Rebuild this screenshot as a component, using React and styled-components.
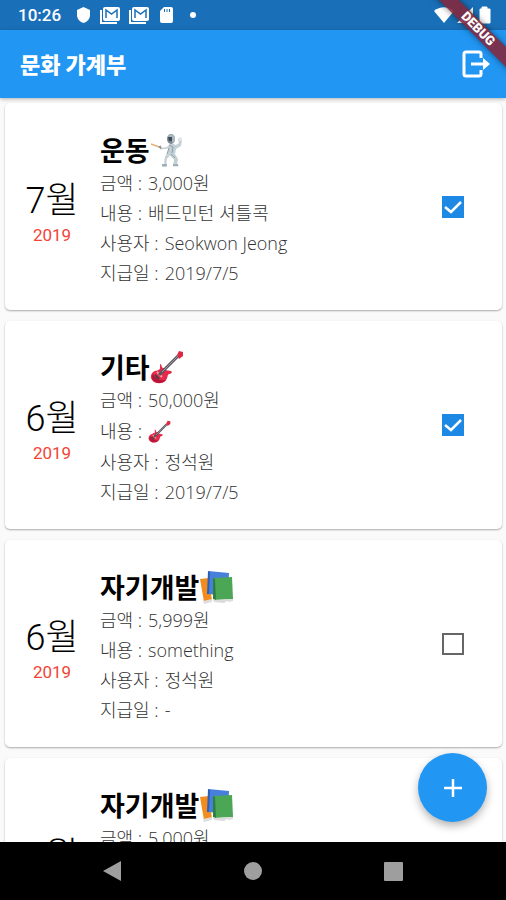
import React from 'react';
import styled, { createGlobalStyle } from 'styled-components';

const GlobalStyle = createGlobalStyle`
    * {
        box-sizing: border-box;
    }
    body {
        margin: 0;
        background: #fafafa;
        font-family: Roboto, 'Noto Sans CJK KR', sans-serif;
    }
    button {
        border: 0;
        padding: 0;
        background: none;
        cursor: pointer;
    }
    svg {
        display: block;
    }
`
const StyledScreen = styled.div`
    position: relative;
    display: flex;
    flex-direction: column;
    height: 100vh;
    overflow: hidden;
`
const StyledStatusBar = styled.div`
    display: flex;
    align-items: center;
    flex: none;
    height: 30px;
    padding: 0 14px 0 18px;
    background: #1a70b8;
    color: white;
`
const StyledClock = styled.span`
    font-size: 17px;
    font-weight: 500;
    line-height: 30px;
    margin-right: 15px;
`
const StyledNotifications = styled.div`
    display: flex;
    align-items: center;
    flex: 1;
    gap: 9px;
`
const StyledSignals = styled.div`
    display: flex;
    align-items: center;
    gap: 3px;
`
const StyledAppBar = styled.header`
    position: relative;
    display: flex;
    align-items: center;
    justify-content: space-between;
    flex: none;
    height: 68px;
    padding: 0 15px 0 20px;
    background: #2196f3;
    color: white;
    box-shadow: 0 1px 4px rgba(0, 0, 0, .3);
`
const StyledAppTitle = styled.h1`
    margin: 0;
    padding-bottom: 3px;
    font-family: 'Noto Sans CJK KR', sans-serif;
    font-size: 22px;
    font-weight: 900;
    line-height: 32px;
`
const StyledBody = styled.main`
    position: relative;
    flex: 1;
    min-height: 0;
`
const StyledList = styled.ul`
    display: flex;
    flex-direction: column;
    gap: 11px;
    height: 100%;
    margin: 0;
    padding: 5px 4px 0 5px;
    overflow: hidden;
    list-style: none;
`
const StyledCard = styled.li`
    display: grid;
    grid-template-columns: 92px 1fr 98px;
    align-items: center;
    flex: none;
    min-height: 207px;
    padding: 22px 0;
    background: white;
    border-radius: 5px;
    box-shadow: 0 1px 2px rgba(0, 0, 0, .32);
`
const StyledDate = styled.div`
    padding: 12px 0 0 2px;
    text-align: center;
`
const StyledMonth = styled.div`
    font-size: 36px;
    font-weight: 300;
    line-height: 44px;
`
const StyledYear = styled.div`
    color: #f44336;
    font-size: 17px;
    line-height: 24px;
`
const StyledDetails = styled.div`
    padding: 6px 0 0 3px;
    font-family: 'Open Sans', 'Noto Sans CJK KR', sans-serif;
`
const StyledCategory = styled.h2`
    display: flex;
    align-items: center;
    margin: 0;
    font-family: 'Noto Sans CJK KR', sans-serif;
    font-size: 27px;
    font-weight: 700;
    line-height: 36px;
`
const StyledField = styled.div`
    display: flex;
    align-items: center;
    gap: 6px;
    height: ${props => props.$tall ? '32px' : '30px'};
    color: #333;
    font-size: 18px;
    font-weight: 300;
    line-height: 30px;
    white-space: nowrap;
`
const StyledCheck = styled.label`
    display: grid;
    place-items: center;
    > * {
        grid-area: 1 / 1;
    }
    svg {
        pointer-events: none;
    }
`
const StyledCheckbox = styled.input`
    appearance: none;
    width: 22px;
    height: 22px;
    margin: 0;
    border: 2px solid #666;
    cursor: pointer;
    &:checked {
        border-color: #1e88e5;
        background: #1e88e5;
    }
`
const StyledAddButton = styled.button`
    position: absolute;
    right: 19px;
    bottom: 20px;
    display: grid;
    place-items: center;
    width: 69px;
    height: 69px;
    border-radius: 50%;
    background: #2196f3;
    box-shadow: 0 4px 8px rgba(0, 0, 0, .3);
`
const StyledNavigation = styled.nav`
    position: relative;
    display: grid;
    grid-template-columns: repeat(3, 1fr);
    justify-items: center;
    align-items: center;
    flex: none;
    height: 58px;
    padding: 0 42px;
    background: black;
`
const StyledBanner = styled.div`
    position: absolute;
    top: 22px;
    right: -42px;
    width: 140px;
    height: 14px;
    background: rgba(130, 40, 62, .9);
    box-shadow: 0 0 6px rgba(0, 0, 0, .5);
    color: white;
    font-size: 13px;
    font-weight: 900;
    line-height: 14px;
    text-align: center;
    transform: rotate(45deg);
    pointer-events: none;
`

const MailIcon = () => (
    <svg width="20" height="18" viewBox="0 0 20 18">
        <path d="M1 4v13h16" fill="none" stroke="white" strokeWidth="2" />
        <path d="M5 1h13q2 0 2 2v10q0 2-2 2H5q-2 0-2-2V3q0-2 2-2z" fill="white" />
        <path d="M6 12V4l5.500 4L17 4v8" fill="none" stroke="#1a70b8" strokeWidth="1.500" />
    </svg>
)

const Fencer = ({ size }) => (
    <svg width={size} height={size} viewBox="0 0 34 34" role="img" aria-label="펜싱">
        <path d="M1 11l11 4" stroke="#e8b27a" strokeWidth="1.500" />
        <path d="M8 13.500l3-1v4z" fill="#8c979c" />
        <path d="M11 15l6-1 4-4 5 2 3-2-1-4 3-1 1 2-1 6-5 3-1 5 3 5-1 6h1.500v1.500H23l1-7-4-4-3 3-1 7 1 1.500h-5v-1.500l2-1 1-8 3-4v-4l-7 1z" fill="#c3d0d6" />
        <path d="M19 12l4 2-1 6M21 21l4 4M19 15l-2 6" fill="none" stroke="#8fa0a8" />
        <ellipse cx="21" cy="6" rx="4" ry="5" fill="#78878f" />
        <path d="M18 3c1-3 6-2 7 1v4l-2 2z" fill="#a9b8bf" />
        <path d="M18 4h4v4h-3z" fill="#3d4a52" />
        <path d="M28 5l3-1 1 4h-3z" fill="#dce5e9" />
        <path d="M12 31h5v2h-5zM23 31h5v2h-5z" fill="#9fb0b8" />
    </svg>
)

const Guitar = ({ size }) => (
    <svg width={size} height={size} viewBox="0 0 34 34" role="img" aria-label="기타">
        <path d="M10 14c2 0 1 3 3 4 2 0 3 1 2 2l6 1c2 1 0 3-2 3-2 1-1 4-3 6-3 4-8 4-12 2-4-3-4-7-1-10 2-2 7-1 7-4z" fill="#e62b4a" />
        <path d="M3 24c-2 3-1 6 2 8 4 2 9 1 11-2-4 1-10 0-13-6z" fill="#b9153a" />
        <path d="M7 22l5 5" stroke="#ff9aaa" strokeWidth="2" />
        <path d="M9 25L28 6" stroke="#5b5560" strokeWidth="3" />
        <path d="M12 22L28 6" stroke="#a19ca5" />
        <path d="M27 5l2-4 4 1v4l-4 3z" fill="#dc2944" />
        <path d="M5 25l4 4" stroke="#444" strokeWidth="2" />
    </svg>
)

const Books = ({ size }) => (
    <svg width={size} height={size} viewBox="0 0 34 34" role="img" aria-label="책">
        <path d="M1 9l9-1 3 23-8 1z" fill="#f28c1e" />
        <path d="M4 31l9-2v3l-8 2z" fill="#dedede" />
        <path d="M9 1l21 2-1 23-20-2z" fill="#477fdc" />
        <path d="M9 1l2 1-1 22H8z" fill="#2c5fb5" />
        <path d="M14 8l19-1 1 22-18 1z" fill="#4ba655" />
        <path d="M14 8l2 1 1 21-3-1z" fill="#2f7f3c" />
        <path d="M14 30l20-1v2l-4 1-2-1-3 2-10-1z" fill="#dcdcdc" />
    </svg>
)

const entries = [
    { month: 7, category: '운동', Icon: Fencer, amount: '3,000', note: '배드민턴 셔틀콕', user: 'Seokwon Jeong', paid: '2019/7/5', done: true },
    { month: 6, category: '기타', Icon: Guitar, amount: '50,000', NoteIcon: Guitar, user: '정석원', paid: '2019/7/5', done: true },
    { month: 6, category: '자기개발', Icon: Books, amount: '5,999', note: 'something', user: '정석원', paid: '-', done: false },
    { month: 4, category: '자기개발', Icon: Books, amount: '5,000', note: 'something', user: '정석원', paid: '-', done: false },
]

class Entry extends React.Component {
    state = { done: this.props.entry.done }

    render() {
        const { month, category, Icon, amount, note, NoteIcon, user, paid } = this.props.entry;
        return (
            <StyledCard>
                <StyledDate>
                    <StyledMonth>{month}월</StyledMonth>
                    <StyledYear>2019</StyledYear>
                </StyledDate>
                <StyledDetails>
                    <StyledCategory>{category}<Icon size={34} /></StyledCategory>
                    <StyledField><span>금액 :</span><span>{amount}원</span></StyledField>
                    <StyledField $tall={!!NoteIcon}>
                        <span>내용 :</span>
                        {NoteIcon ? <NoteIcon size={23} /> : <span>{note}</span>}
                    </StyledField>
                    <StyledField><span>사용자 :</span><span>{user}</span></StyledField>
                    <StyledField><span>지급일 :</span><span>{paid}</span></StyledField>
                </StyledDetails>
                <StyledCheck>
                    <StyledCheckbox
                        type="checkbox"
                        aria-label={`${month}월 ${category}`}
                        checked={this.state.done}
                        onChange={e => this.setState({ done: e.target.checked })}
                    />
                    {this.state.done && (
                        <svg width="22" height="22" viewBox="0 0 22 22">
                            <path d="M3 11l6 5L19 6" fill="none" stroke="white" strokeWidth="2.500" />
                        </svg>
                    )}
                </StyledCheck>
            </StyledCard>
        )
    }
}

export default function App() {
    return (
        <StyledScreen>
            <GlobalStyle />
            <StyledStatusBar>
                <StyledClock>10:26</StyledClock>
                <StyledNotifications>
                    <svg width="15" height="18" viewBox="0 0 15 18">
                        <path d="M7.500 1L14 4v5c0 4-3 7-6.500 8C4 16 1 13 1 9V4z" fill="white" />
                    </svg>
                    <MailIcon />
                    <MailIcon />
                    <svg width="16" height="18" viewBox="0 0 16 18">
                        <path d="M6 1h7q2 0 2 2v12q0 2-2 2H4q-2 0-2-2V5z" fill="white" />
                        <path d="M6.500 3v3M9 3v3M11.500 3v3" stroke="#1a70b8" />
                    </svg>
                    <svg width="20" height="6" viewBox="0 0 20 6">
                        <circle cx="10" cy="3" r="3" fill="white" />
                    </svg>
                </StyledNotifications>
                <StyledSignals>
                    <svg width="20" height="17" viewBox="0 0 20 17">
                        <path d="M0 4c6-5 14-5 20 0L10 16z" fill="white" />
                    </svg>
                    <svg width="18" height="17" viewBox="0 0 18 17">
                        <path d="M0 16L16 0v16z" fill="white" />
                    </svg>
                    <svg width="14" height="18" viewBox="0 0 14 18">
                        <path d="M4 1h5v2h3v14H2V3h2z" fill="white" stroke="white" strokeLinejoin="round" />
                    </svg>
                </StyledSignals>
            </StyledStatusBar>
            <StyledAppBar>
                <StyledAppTitle>문화 가계부</StyledAppTitle>
                <button aria-label="로그아웃">
                    <svg width="30" height="30" viewBox="0 0 30 30">
                        <path d="M20 9V5q0-2-2-2H5Q3 3 3 5v20q0 2 2 2h13q2 0 2-2v-4" fill="none" stroke="white" strokeWidth="3" />
                        <path d="M10 13.500h12V9l7 6-7 6v-4.500H10z" fill="white" />
                    </svg>
                </button>
            </StyledAppBar>
            <StyledBody>
                <StyledList>
                    {entries.map((entry, i) => <Entry key={i} entry={entry} />)}
                </StyledList>
                <StyledAddButton aria-label="추가">
                    <svg width="18" height="18" viewBox="0 0 18 18">
                        <path d="M9 0v18M0 9h18" stroke="white" strokeWidth="2.500" />
                    </svg>
                </StyledAddButton>
            </StyledBody>
            <StyledNavigation>
                <button aria-label="뒤로">
                    <svg width="20" height="22" viewBox="0 0 20 22">
                        <path d="M1 11L19 1v20z" fill="#9e9e9e" />
                    </svg>
                </button>
                <button aria-label="홈">
                    <svg width="20" height="20" viewBox="0 0 20 20">
                        <circle cx="10" cy="10" r="9" fill="#9e9e9e" />
                    </svg>
                </button>
                <button aria-label="최근 앱">
                    <svg width="20" height="20" viewBox="0 0 20 20">
                        <rect x="0" y="1" width="19" height="19" rx="1" fill="#9e9e9e" />
                    </svg>
                </button>
            </StyledNavigation>
            <StyledBanner>DEBUG</StyledBanner>
        </StyledScreen>
    )
}
